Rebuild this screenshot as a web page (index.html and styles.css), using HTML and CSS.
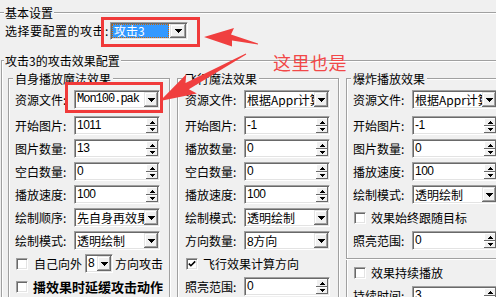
FILE: index.html
```html
<!DOCTYPE html>
<html lang="zh-CN">
<head>
<meta charset="utf-8">
<title>攻击效果配置</title>
<link rel="stylesheet" href="styles.css">
</head>
<body>
<div class="g-basic">
  <div class="title">基本设置</div>
  <div class="pick">
    <span class="plbl">选择要配置的攻击:</span>
    <div class="combo sel"><span class="hl">攻击3</span><span class="btn wide"><svg width="7" height="4" viewBox="0 0 7 4"><path d="M0 0h7v1H6v1H5v1H4v1H3V3H2V2H1V1H0z"/></svg></span></div>
  </div>
</div>

<div class="g-main">
  <div class="title">攻击3的攻击效果配置</div>
  <div class="inner">
    <div class="grp">
      <div class="title">自身播放魔法效果</div>
      <div class="row first"><span class="lbl">资源文件:</span><div class="combo"><span class="val mono">Mon100.pak</span><span class="btn"><svg width="7" height="4" viewBox="0 0 7 4"><path d="M0 0h7v1H6v1H5v1H4v1H3V3H2V2H1V1H0z"/></svg></span></div></div>
      <div class="row"><span class="lbl">开始图片:</span><div class="edit"><span class="val num">1011</span><span class="spin"><i class="up"><svg width="5" height="3" viewBox="0 0 5 3"><path d="M2 0h1v1h1v1h1v1H0V2h1V1h1z"/></svg></i><i class="dn"><svg width="5" height="3" viewBox="0 0 5 3"><path d="M0 0h5v1H4v1H3v1H2V2H1V1H0z"/></svg></i></span></div></div>
      <div class="row"><span class="lbl">图片数量:</span><div class="edit"><span class="val num">13</span><span class="spin"><i class="up"><svg width="5" height="3" viewBox="0 0 5 3"><path d="M2 0h1v1h1v1h1v1H0V2h1V1h1z"/></svg></i><i class="dn"><svg width="5" height="3" viewBox="0 0 5 3"><path d="M0 0h5v1H4v1H3v1H2V2H1V1H0z"/></svg></i></span></div></div>
      <div class="row"><span class="lbl">空白数量:</span><div class="edit"><span class="val num">0</span><span class="spin"><i class="up"><svg width="5" height="3" viewBox="0 0 5 3"><path d="M2 0h1v1h1v1h1v1H0V2h1V1h1z"/></svg></i><i class="dn"><svg width="5" height="3" viewBox="0 0 5 3"><path d="M0 0h5v1H4v1H3v1H2V2H1V1H0z"/></svg></i></span></div></div>
      <div class="row"><span class="lbl">播放速度:</span><div class="edit"><span class="val num">100</span><span class="spin"><i class="up"><svg width="5" height="3" viewBox="0 0 5 3"><path d="M2 0h1v1h1v1h1v1H0V2h1V1h1z"/></svg></i><i class="dn"><svg width="5" height="3" viewBox="0 0 5 3"><path d="M0 0h5v1H4v1H3v1H2V2H1V1H0z"/></svg></i></span></div></div>
      <div class="row"><span class="lbl">绘制顺序:</span><div class="combo"><span class="val">先自身再效果</span><span class="btn"><svg width="7" height="4" viewBox="0 0 7 4"><path d="M0 0h7v1H6v1H5v1H4v1H3V3H2V2H1V1H0z"/></svg></span></div></div>
      <div class="row"><span class="lbl">绘制模式:</span><div class="combo"><span class="val">透明绘制</span><span class="btn"><svg width="7" height="4" viewBox="0 0 7 4"><path d="M0 0h7v1H6v1H5v1H4v1H3V3H2V2H1V1H0z"/></svg></span></div></div>
      <div class="row"><span class="cb wide-gap"></span><span>自己向外</span><div class="combo small"><span class="val num">8</span><span class="btn"><svg width="7" height="4" viewBox="0 0 7 4"><path d="M0 0h7v1H6v1H5v1H4v1H3V3H2V2H1V1H0z"/></svg></span></div><span>方向攻击</span></div>
      <div class="row"><span class="cb"></span><span class="bold">播效果时延缓攻击动作</span></div>
    </div>

    <div class="grp grp-mid">
      <div class="title">飞行魔法效果</div>
      <div class="row first"><span class="lbl">资源文件:</span><div class="combo"><span class="val">根据Appr计算</span><span class="btn"><svg width="7" height="4" viewBox="0 0 7 4"><path d="M0 0h7v1H6v1H5v1H4v1H3V3H2V2H1V1H0z"/></svg></span></div></div>
      <div class="row"><span class="lbl">开始图片:</span><div class="edit"><span class="val num">-1</span><span class="spin"><i class="up"><svg width="5" height="3" viewBox="0 0 5 3"><path d="M2 0h1v1h1v1h1v1H0V2h1V1h1z"/></svg></i><i class="dn"><svg width="5" height="3" viewBox="0 0 5 3"><path d="M0 0h5v1H4v1H3v1H2V2H1V1H0z"/></svg></i></span></div></div>
      <div class="row"><span class="lbl">播放数量:</span><div class="edit"><span class="val num">0</span><span class="spin"><i class="up"><svg width="5" height="3" viewBox="0 0 5 3"><path d="M2 0h1v1h1v1h1v1H0V2h1V1h1z"/></svg></i><i class="dn"><svg width="5" height="3" viewBox="0 0 5 3"><path d="M0 0h5v1H4v1H3v1H2V2H1V1H0z"/></svg></i></span></div></div>
      <div class="row"><span class="lbl">空白数量:</span><div class="edit"><span class="val num">0</span><span class="spin"><i class="up"><svg width="5" height="3" viewBox="0 0 5 3"><path d="M2 0h1v1h1v1h1v1H0V2h1V1h1z"/></svg></i><i class="dn"><svg width="5" height="3" viewBox="0 0 5 3"><path d="M0 0h5v1H4v1H3v1H2V2H1V1H0z"/></svg></i></span></div></div>
      <div class="row"><span class="lbl">播放速度:</span><div class="edit"><span class="val num">100</span><span class="spin"><i class="up"><svg width="5" height="3" viewBox="0 0 5 3"><path d="M2 0h1v1h1v1h1v1H0V2h1V1h1z"/></svg></i><i class="dn"><svg width="5" height="3" viewBox="0 0 5 3"><path d="M0 0h5v1H4v1H3v1H2V2H1V1H0z"/></svg></i></span></div></div>
      <div class="row"><span class="lbl">绘制模式:</span><div class="combo"><span class="val">透明绘制</span><span class="btn"><svg width="7" height="4" viewBox="0 0 7 4"><path d="M0 0h7v1H6v1H5v1H4v1H3V3H2V2H1V1H0z"/></svg></span></div></div>
      <div class="row"><span class="lbl">方向数量:</span><div class="combo"><span class="val"><span class="num">8</span>方向</span><span class="btn"><svg width="7" height="4" viewBox="0 0 7 4"><path d="M0 0h7v1H6v1H5v1H4v1H3V3H2V2H1V1H0z"/></svg></span></div></div>
      <div class="row"><span class="cb"><svg width="8" height="8" viewBox="0 0 8 8"><polyline points="0.8,3.6 2.9,5.7 7.2,1.4" fill="none" stroke="#000" stroke-width="1.6"/></svg></span><span>飞行效果计算方向</span></div>
      <div class="row"><span class="lbl">照亮范围:</span><div class="edit"><span class="val num">0</span><span class="spin"><i class="up"><svg width="5" height="3" viewBox="0 0 5 3"><path d="M2 0h1v1h1v1h1v1H0V2h1V1h1z"/></svg></i><i class="dn"><svg width="5" height="3" viewBox="0 0 5 3"><path d="M0 0h5v1H4v1H3v1H2V2H1V1H0z"/></svg></i></span></div></div>
    </div>

    <div class="grp">
      <div class="title">爆炸播放效果</div>
      <div class="row first"><span class="lbl">资源文件:</span><div class="combo"><span class="val">根据Appr计算</span><span class="btn"><svg width="7" height="4" viewBox="0 0 7 4"><path d="M0 0h7v1H6v1H5v1H4v1H3V3H2V2H1V1H0z"/></svg></span></div></div>
      <div class="row"><span class="lbl">开始图片:</span><div class="edit"><span class="val num">-1</span><span class="spin"><i class="up"><svg width="5" height="3" viewBox="0 0 5 3"><path d="M2 0h1v1h1v1h1v1H0V2h1V1h1z"/></svg></i><i class="dn"><svg width="5" height="3" viewBox="0 0 5 3"><path d="M0 0h5v1H4v1H3v1H2V2H1V1H0z"/></svg></i></span></div></div>
      <div class="row"><span class="lbl">图片数量:</span><div class="edit"><span class="val num">0</span><span class="spin"><i class="up"><svg width="5" height="3" viewBox="0 0 5 3"><path d="M2 0h1v1h1v1h1v1H0V2h1V1h1z"/></svg></i><i class="dn"><svg width="5" height="3" viewBox="0 0 5 3"><path d="M0 0h5v1H4v1H3v1H2V2H1V1H0z"/></svg></i></span></div></div>
      <div class="row"><span class="lbl">播放速度:</span><div class="edit"><span class="val num">100</span><span class="spin"><i class="up"><svg width="5" height="3" viewBox="0 0 5 3"><path d="M2 0h1v1h1v1h1v1H0V2h1V1h1z"/></svg></i><i class="dn"><svg width="5" height="3" viewBox="0 0 5 3"><path d="M0 0h5v1H4v1H3v1H2V2H1V1H0z"/></svg></i></span></div></div>
      <div class="row"><span class="lbl">绘制模式:</span><div class="combo"><span class="val">透明绘制</span><span class="btn"><svg width="7" height="4" viewBox="0 0 7 4"><path d="M0 0h7v1H6v1H5v1H4v1H3V3H2V2H1V1H0z"/></svg></span></div></div>
      <div class="row"><span class="cb"></span><span>效果始终跟随目标</span></div>
      <div class="row"><span class="lbl">照亮范围:</span><div class="edit"><span class="val num">0</span><span class="spin"><i class="up"><svg width="5" height="3" viewBox="0 0 5 3"><path d="M2 0h1v1h1v1h1v1H0V2h1V1h1z"/></svg></i><i class="dn"><svg width="5" height="3" viewBox="0 0 5 3"><path d="M0 0h5v1H4v1H3v1H2V2H1V1H0z"/></svg></i></span></div></div>
      <div class="sep"></div>
      <div class="row"><span class="cb"></span><span>效果持续播放</span></div>
      <div class="row"><span class="lbl">持续时间:</span><div class="edit"><span class="val num">3</span><span class="spin"><i class="up"><svg width="5" height="3" viewBox="0 0 5 3"><path d="M2 0h1v1h1v1h1v1H0V2h1V1h1z"/></svg></i><i class="dn"><svg width="5" height="3" viewBox="0 0 5 3"><path d="M0 0h5v1H4v1H3v1H2V2H1V1H0z"/></svg></i></span></div></div>
    </div>
  </div>
</div>

<svg class="marks" width="496" height="297" viewBox="0 0 496 297">
  <rect x="102.5" y="18.5" width="96" height="27" fill="none" stroke="#f03a3a" stroke-width="3"/>
  <rect x="66.5" y="83.5" width="95" height="28" fill="none" stroke="#f03a3a" stroke-width="3"/>
  <polygon points="204,37 234,28 231,34.5 258,43.4 258,44.6 232,40.6 232,46.5" fill="#f03f3f"/>
  <polygon points="160,101 186.3,74.2 185.5,83.1 245.8,53.6 246.2,54.4 188.9,89.3 196.9,93.4" fill="#f03f3f"/>
</svg>
<span class="note">这里也是</span>
</body>
</html>
```
FILE: styles.css
```css
html, body {
  margin: 0;
}
body {
  position: relative;
  width: 496px;
  height: 297px;
  box-sizing: border-box;
  padding-top: 12px;
  overflow: hidden;
  background: #f0f0f0;
  color: #000;
  font: 12px/14px "Noto Sans CJK SC", "Liberation Sans", sans-serif;
}

.title {
  width: fit-content;
  height: 14px;
  line-height: 14px;
  margin-top: -7px;
  padding: 0 1px;
  background: #f0f0f0;
  white-space: nowrap;
}

/* group 1: basic settings */
.g-basic {
  border-top: 1px solid #a0a0a0;
  box-shadow: inset 0 1px #fff;
}
.g-basic .title {
  margin-left: 4px;
}
.pick {
  display: flex;
  align-items: center;
  height: 18px;
  margin-top: 2px;
  padding-left: 5px;
}
.plbl {
  width: 105px;
  letter-spacing: 0.5px;
  white-space: nowrap;
}

/* group 2: effect settings */
.g-main {
  margin-top: 20px;
  margin-left: 1px;
  height: 240px;
  border-top: 1px solid #a0a0a0;
  border-left: 1px solid #a0a0a0;
  box-shadow: inset 1px 1px #fff;
}
.g-main > .title {
  margin-left: 2px;
}
.inner {
  display: flex;
  gap: 7px;
  margin-top: 10px;
  padding-left: 6px;
}
.grp {
  flex: 0 0 162px;
  box-sizing: border-box;
  height: 230px;
  display: flex;
  flex-direction: column;
  padding-left: 6px;
  border: 1px solid #a0a0a0;
  box-shadow: inset 1px 1px #fff, 1px 1px #fff;
}
.grp-mid {
  padding-left: 7px;
}
.grp > .title {
  margin-left: -2px;
  margin-bottom: 4px;
  padding: 0 2px;
}

.row {
  display: flex;
  align-items: center;
  flex-shrink: 0;
  height: 19px;
  margin-bottom: 4px;
  white-space: nowrap;
}
.row.first {
  margin-bottom: 7px;
}
.lbl {
  width: 59px;
  flex-shrink: 0;
}

/* sunken controls */
.edit, .combo {
  display: flex;
  flex-shrink: 0;
  box-sizing: border-box;
  width: 86px;
  height: 19px;
  padding: 1px;
  border: 1px solid;
  border-color: #a0a0a0 #fff #fff #a0a0a0;
  box-shadow: inset 1px 1px #696969, inset -1px -1px #e3e3e3;
  background: #fff;
}
.val {
  flex: 1;
  min-width: 0;
  overflow: hidden;
  padding-left: 1px;
  line-height: 15px;
  white-space: nowrap;
}
.num {
  font-family: "Liberation Sans", sans-serif;
  font-size: 12px;
  letter-spacing: -0.5px;
}
.mono {
  font-family: "Liberation Mono", monospace;
  font-size: 12px;
  letter-spacing: -1px;
}

.spin {
  display: flex;
  flex-direction: column;
  width: 12px;
}
.spin i {
  display: flex;
  align-items: center;
  justify-content: center;
  background: #f0f0f0;
  box-shadow: inset -1px -1px #696969, inset 1px 1px #fff;
}
.spin .up {
  height: 8px;
}
.spin .dn {
  height: 7px;
}

.btn {
  display: flex;
  align-items: center;
  justify-content: center;
  flex-shrink: 0;
  width: 14px;
  background: #f0f0f0;
  box-shadow: inset -1px -1px #696969, inset 1px 1px #e3e3e3,
              inset -2px -2px #a0a0a0, inset 2px 2px #fff;
}
.btn.wide {
  width: 16px;
}
svg path {
  fill: #000;
}

.combo.sel {
  width: 78px;
  height: 18px;
}
.hl {
  flex: 1;
  margin-right: 1px;
  padding-left: 1px;
  border: 1px dotted #cc6600;
  background: #3399ff;
  color: #fff;
  line-height: 12px;
}

.combo.small {
  width: 28px;
  margin: 0 2px 0 3px;
}

/* checkbox */
.cb {
  display: flex;
  align-items: center;
  justify-content: center;
  flex-shrink: 0;
  box-sizing: border-box;
  width: 12px;
  height: 12px;
  margin: 0 5px 0 1px;
  border: 1px solid;
  border-color: #a0a0a0 #fff #fff #a0a0a0;
  box-shadow: inset 1px 1px #696969, inset -1px -1px #e3e3e3;
  background: #fff;
}
.cb.wide-gap {
  margin-right: 6px;
}
.bold {
  font-size: 13px;
  font-weight: 700;
}

.sep {
  flex-shrink: 0;
  height: 0;
  margin: 4px -6px 3px -7px;
  border-top: 1px solid #a0a0a0;
  border-bottom: 1px solid #fff;
}

/* annotations drawn over the dialog */
.marks {
  position: absolute;
  left: 0;
  top: 0;
  pointer-events: none;
}
.note {
  position: absolute;
  left: 273px;
  top: 52px;
  font-size: 18px;
  line-height: 20px;
  letter-spacing: 0.5px;
  color: #f24848;
  white-space: nowrap;
}
```
